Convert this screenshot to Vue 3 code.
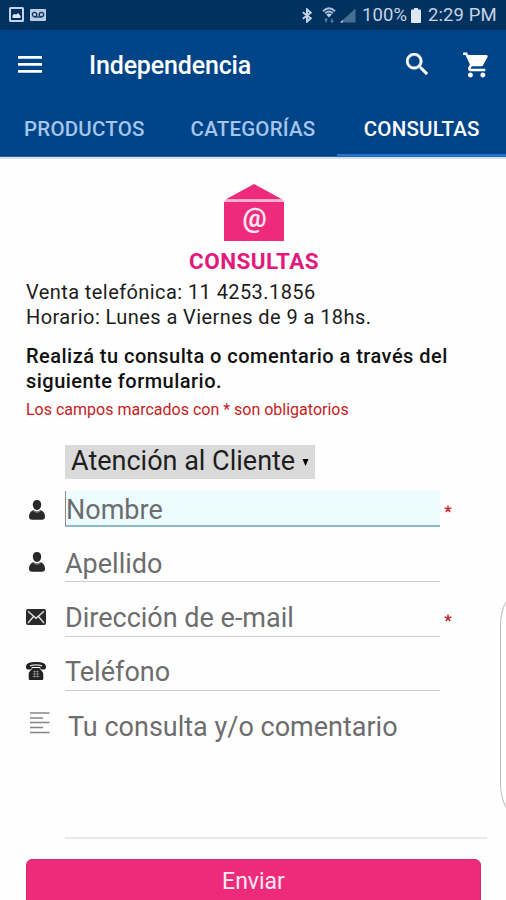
<script setup>
const tabs = [
  { id: 'productos', label: 'PRODUCTOS' },
  { id: 'categorias', label: 'CATEGORÍAS' },
  { id: 'consultas', label: 'CONSULTAS', active: true },
]
const fields = [
  { id: 'nombre', label: 'Nombre', icon: 'person', required: true, focused: true },
  { id: 'apellido', label: 'Apellido', icon: 'person' },
  { id: 'email', label: 'Dirección de e-mail', icon: 'mail', required: true },
  { id: 'telefono', label: 'Teléfono', icon: 'phone' },
]
</script>

<template>
  <div class="screen">
    <div class="status">
      <svg class="st-image" viewBox="0 0 15 16"><path fill-rule="evenodd" fill="#c5d2e8" d="M1.500 0h12A1.500 1.500 0 0 1 15 1.500v12a1.500 1.500 0 0 1-1.500 1.500h-12A1.500 1.500 0 0 1 0 13.500v-12A1.500 1.500 0 0 1 1.500 0zM2 2v11h11V2z"/><path fill="#dfe7f5" d="M3.500 11V8.500l2-1.700 1.500 1L9 6l2.500 3v2z"/></svg>
      <svg class="st-voice" viewBox="0 0 16 12"><rect width="16" height="12" rx="1" fill="#b7cbe2"/><g fill="none" stroke="#0e3560" stroke-width="1.300"><circle cx="4.600" cy="5.600" r="2.200"/><circle cx="11.400" cy="5.600" r="2.200"/><path d="M4.600 8h6.800"/></g></svg>
      <span class="grow"></span>
      <svg class="st-bt" viewBox="0 0 12 16"><path d="M1.500 4.500 10 11 6 14.500v-13L10 5 1.500 11.500" fill="none" stroke="#c3d2e6" stroke-width="2.100"/></svg>
      <svg class="st-wifi" viewBox="0 0 14 16"><path d="M1 4.200Q7-1.500 13 4.200M3.200 6.300Q7 2.800 10.800 6.300" fill="none" stroke="#a9bfd9" stroke-width="1.900"/><path d="M4.300 7.600Q7 5.500 9.700 7.600L7 10.500z" fill="#c5d5e8"/><path d="M4 15.500v-3.500l-1.300 1.300M4 12l1.300 1.300M10 11.500V15l-1.300-1.300M10 15l1.300-1.300" fill="none" stroke="#5d7f9f" stroke-width="1.300"/></svg>
      <svg class="st-signal" viewBox="0 0 16 14"><path d="M0 14 15.500 0v14z" fill="#456e92"/><path d="M0 14l3-2.700V14z" fill="#aebfd1"/></svg>
      <span class="st-pct">100%</span>
      <svg class="st-batt" viewBox="0 0 10 15"><path fill="#dde8f2" d="M3 0h4v1.500h2q1 0 1 1V14q0 1-1 1H1q-1 0-1-1V2.500q0-1 1-1h2z"/></svg>
      <span class="st-time">2:29 PM</span>
    </div>

    <header class="appbar">
      <svg class="menu" viewBox="0 0 24 18"><path fill="#fff" d="M0 0h24v2.700H0zM0 7h24v2.700H0zM0 14h24v2.700H0z"/></svg>
      <h1 class="title">Independencia</h1>
      <svg class="search" viewBox="3 3 17.500 17.500"><path fill="#fff" stroke="#fff" stroke-width=".4" d="M15.500 14h-.79l-.28-.27A6.471 6.471 0 0 0 16 9.500 6.500 6.500 0 1 0 9.500 16c1.610 0 3.090-.59 4.230-1.570l.27.28v.79l5 4.990L20.490 19l-4.990-5zm-6 0C7.010 14 5 11.990 5 9.500S7.010 5 9.500 5 14 7.010 14 9.500 11.990 14 9.500 14z"/></svg>
      <svg class="cart" viewBox="1 2 21 20"><path fill="#fff" d="M7 18c-1.100 0-1.990.9-1.990 2S5.900 22 7 22s2-.9 2-2-.9-2-2-2zM1 2v2h2l3.600 7.590-1.350 2.450c-.16.280-.25.610-.25.960 0 1.100.9 2 2 2h12v-2H7.420c-.14 0-.25-.11-.25-.25l.03-.12.900-1.630h7.450c.75 0 1.410-.41 1.750-1.030l3.580-6.490A1.003 1.003 0 0 0 20 4H5.210l-.94-2H1zm16 16c-1.100 0-1.990.9-1.990 2s.89 2 1.990 2 2-.9 2-2-.9-2-2-2z"/></svg>
    </header>

    <nav class="tabs">
      <div v-for="t in tabs" :key="t.id" class="tab" :class="[t.id, { active: t.active }]"><span>{{ t.label }}</span></div>
    </nav>

    <main class="content">
      <div class="hero">
        <svg class="envelope" viewBox="0 0 60 57"><path fill="#ed2a7b" d="M30 0 58.500 15.500h-57zM0 18h60v39H0z"/><path fill="#f9b3d1" d="M1.500 15.500h57L60 18H0z"/><text x="30.500" y="43" text-anchor="middle" class="at">@</text></svg>
        <h2 class="heading">CONSULTAS</h2>
      </div>
      <p class="info phone-line">Venta telefónica: 11 4253.1856</p>
      <p class="info hours-line">Horario: Lunes a Viernes de 9 a 18hs.</p>
      <p class="lead">Realizá tu consulta o comentario a través del<br>siguiente formulario.</p>
      <p class="note">Los campos marcados con * son obligatorios</p>

      <div class="form">
        <div class="select"><span>Atención al Cliente</span><svg viewBox="0 0 7 7"><path d="M.5 0h6L3.500 7z"/></svg></div>

        <div v-for="f in fields" :key="f.id" class="row">
          <div class="icon">
            <svg v-if="f.icon === 'person'" class="i-person" :class="{ low: f.focused }" viewBox="0 0 16 20"><path fill="#292929" d="M8 0c2.700 0 4.200 1.800 4.200 4.600C12.200 7.600 10.600 10 8 10S3.800 7.600 3.800 4.600C3.800 1.800 5.300 0 8 0z"/><path fill="#292929" d="M4.200 10.300Q8 14.500 11.800 10.300C14.600 11.300 16 13.600 16 16.500c0 2.300-1 3.200-3 3.200H3c-2 0-3-.9-3-3.200 0-2.900 1.400-5.200 4.200-6.200z"/><path d="M4 10.200Q8 13.700 12 10.200" fill="none" stroke="#777" stroke-width="1.400"/></svg>
            <svg v-else-if="f.icon === 'mail'" class="i-mail" viewBox="0 0 20 16"><rect width="20" height="16" rx="2" fill="#292929"/><path d="M2 2.200 10 9.300 18 2.200M2 14 7.500 7.500M18 14 12.500 7.500" fill="none" stroke="#e5e5e5" stroke-width="1.300"/></svg>
            <svg v-else class="i-phone" viewBox="0 0 20 18"><path fill="#222" d="M10 0c6 0 10 1.300 10 4.800 0 1.700-.6 2.700-2 2.700h-2.500c-1 0-1.300-.8-1.300-2.500H5.800C5.800 6.700 5.500 7.500 4.500 7.500H2C.6 7.500 0 6.500 0 4.800 0 1.300 4 0 10 0z"/><path fill="#222" d="M6.500 6h7c.5 2 3.800 3.500 3.800 6v4.800q0 1.200-1.200 1.200H3.900q-1.200 0-1.200-1.200V12c0-2.500 3.300-4 3.800-6z"/><path d="M7.300 9.500h5.400M6.800 12h6.400M6.500 14.500h7M8.500 8.500v7M11.500 8.500v7" stroke="#999" stroke-width=".7" fill="none"/><path d="M4 3.800q6-2 12 0" stroke="#ddd" stroke-width="1.300" fill="none"/></svg>
          </div>
          <div class="input" :class="[f.id, { focused: f.focused }]"><span>{{ f.label }}</span></div>
          <svg v-if="f.required" class="star" viewBox="-5 -5 10 10"><path d="M0 0V-4.500M0 0 4.300-1.400M0 0 2.700 3.700M0 0-2.700 3.700M0 0-4.300-1.400" stroke="#c62b2b" stroke-width="1.900"/></svg>
        </div>

        <div class="area-row">
          <svg class="lines" viewBox="0 0 20 22"><path d="M0 1h19.500M0 6h13M0 10.500h19.500M0 15.500h13M0 20.500h19.500" stroke="#858585" stroke-width="1.400"/></svg>
          <div class="area"><span>Tu consulta y/o comentario</span></div>
        </div>
      </div>
      <div class="send"><span>Enviar</span></div>
    </main>
    <div class="edge"></div>
  </div>
</template>

<style>
body { margin: 0; overflow: hidden; }
</style>
<style scoped>
* { box-sizing: border-box; }
svg { display: block; flex: none; }
.screen { position: relative; width: 506px; height: 900px; overflow: hidden; background: #fefefe; font-family: Roboto, "Liberation Sans", sans-serif; color: #1c1c1c; white-space: nowrap; }
.status { height: 30px; background: #01325f; display: flex; align-items: center; padding: 0 9px; color: #c5d3e4; font-size: 18.500px; }
.grow { flex: 1; }
.st-image { width: 15px; height: 16px; }
.st-voice { width: 16px; height: 12px; margin-left: 6px; }
.st-bt { width: 12px; height: 15px; margin-right: 9px; }
.st-wifi { width: 14px; height: 16px; margin-right: 4px; }
.st-signal { width: 16px; height: 15px; margin-right: 6px; }
.st-pct { width: 45px; letter-spacing: .1px; }
.st-batt { width: 10px; height: 15px; margin: 0 7px 0 4px; }
.st-time { width: 69px; letter-spacing: .1px; }
.appbar { height: 72px; background: #004488; display: flex; align-items: center; padding-left: 18px; }
.menu { width: 24px; height: 18px; margin-top: -3px; }
.title { margin: 0 0 0 47px; width: 317px; font-size: 25px; font-weight: 500; line-height: 30px; letter-spacing: -.15px; color: #fff; }
.search { width: 22px; height: 22px; margin-top: -4px; }
.cart { width: 26px; height: 26px; margin-left: 35px; margin-top: -2px; }
.tabs { height: 55px; background: #004488; display: flex; border-bottom: 1px solid #2d639d; }
.tab { width: 169px; display: flex; align-items: center; justify-content: center; padding-top: 1px; font-size: 20.500px; font-weight: 500; letter-spacing: .2px; color: #a5c5ec; border-bottom: 1px solid #013c7a; }
.tab.active { color: #fff; border-bottom: 2px solid #2476d6; padding-top: 2px; }
.content { padding: 0 26px; border-top: 2px solid #d3e2ec; }
.hero { display: flex; flex-direction: column; align-items: center; padding-top: 25px; }
.envelope { width: 60px; height: 57px; margin-left: 1px; }
.at { font-family: Roboto, sans-serif; font-size: 27px; font-weight: 700; fill: #ffe3ef; }
.heading { margin: 6px 0 0 2px; font-size: 22.500px; font-weight: 700; line-height: 28px; letter-spacing: .4px; color: #e3197b; }
.info { margin: 0; font-size: 20px; line-height: 24.500px; letter-spacing: .42px; }
.phone-line { margin-top: 5px; }
.lead { margin: 15px 0 0; font-size: 20px; font-weight: 500; line-height: 24.500px; letter-spacing: .47px; color: #111; }
.note { margin: 7px 0 0; font-size: 16px; line-height: 20px; color: #c4221d; }
.form { padding-top: 25px; }
.select { margin-left: 39px; width: 250px; height: 34px; background: #dadada; display: flex; align-items: center; padding: 0 6px 2px; justify-content: space-between; font-size: 27px; color: #1e1e1e; }
.select svg { width: 7px; height: 7px; margin-top: 2px; }
.row { display: flex; align-items: center; height: 40px; margin-top: 14.300px; }
.select + .row { margin-top: 10px; }
.icon { width: 39px; }
.i-person { width: 16px; height: 20px; margin: -2px 0 0 3px; }
.i-person.low { margin-top: 2px; }
.i-mail { width: 20px; height: 16px; margin-top: -2px; }
.i-phone { width: 20px; height: 18px; margin-top: -1px; }
.input { width: 375px; height: 38px; display: flex; align-items: center; border-bottom: 1px solid #ccc; padding-top: 2px; font-size: 27px; color: #6d6d6d; }
.input.focused { background: #edfdff; border-bottom: 2px solid #8fb9cd; border-left: 1px solid #888; height: 36px; padding-top: 4px; }
.star { width: 8px; height: 8px; margin-left: 4px; }
.area-row { display: flex; margin-top: 19px; }
.lines { width: 20px; height: 22px; margin: 1px 0 0 4px; }
.area { margin-left: 15px; width: 422px; flex: none; height: 128px; border-bottom: 2px solid #e9e9e9; padding-left: 3px; font-size: 27px; line-height: 32px; color: #6d6d6d; }
.send { margin-top: 20px; width: 455px; height: 60px; border-radius: 6px; background: #ee2b7a; border: 1px solid #d92770; color: #ffe9f3; font-size: 23px; display: flex; justify-content: center; line-height: 43px; }
.edge { position: absolute; left: 500px; top: 591px; width: 40px; height: 227px; border: 1px solid #bdbdbd; border-radius: 22px / 38px; background: #fff; }
</style>
